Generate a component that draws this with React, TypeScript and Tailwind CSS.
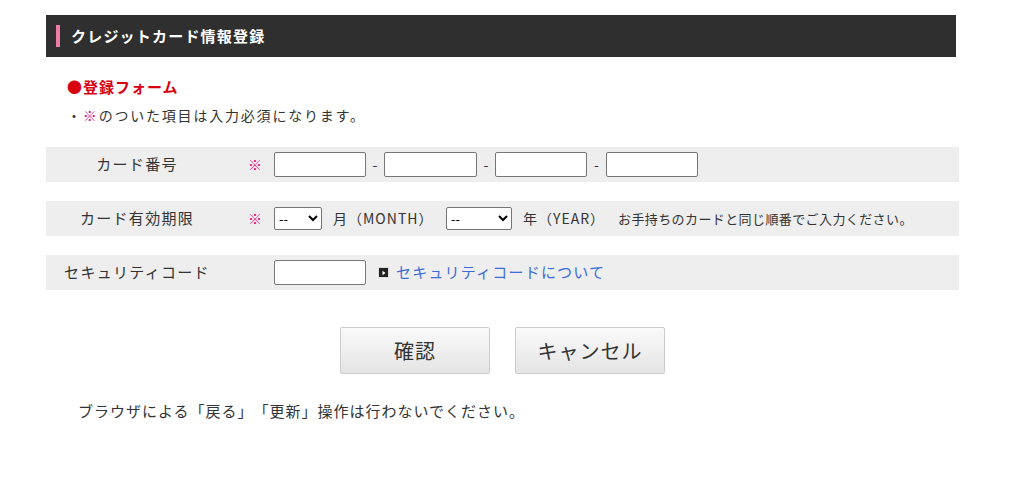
import type { ReactNode } from "react";

const font = { fontFamily: '"Noto Sans CJK JP", "Noto Sans", sans-serif' };

function Row({ label, mark, children }: { label: string; mark?: boolean; children: ReactNode }) {
  return (
    <div className="flex h-[35px] items-center bg-[#eeeeee]">
      <div className="w-[182px] text-center text-[15px] tracking-[1.3px] text-[#333]">{label}</div>
      <div className="w-[46px] pl-[20px] text-[14px] text-[#e4007f]">{mark ? "※" : ""}</div>
      <div className="flex items-center">{children}</div>
    </div>
  );
}

function Box({ w = "w-[92px]" }: { w?: string }) {
  return <input type="text" className={`${w} h-[25px] rounded-[2px] border border-[#767676] bg-white px-1 text-[14px]`} />;
}

function Dash({ w }: { w: string }) {
  return <span className={`${w} text-center text-[14px]`}>-</span>;
}

function Sel({ w }: { w: string }) {
  return (
    <select className={`${w} h-[23px] rounded-[2px] border border-[#767676] bg-white text-[13px] text-black`}>
      <option>--</option>
    </select>
  );
}

export default function App() {
  return (
    <div
      className="min-h-[485px] bg-white text-[#333] [text-spacing-trim:space-all]"
      style={font}
    >
      <div className="ml-[46px] w-[913px] pt-[15px]">
        <div className="flex h-[42px] w-[910px] items-center bg-[#2f2f2f] pl-[10px]">
          <span className="h-[22px] w-[4px] bg-[#f07ca8]" />
          <span className="ml-[11px] text-[15px] font-bold tracking-[1.2px] text-white">クレジットカード情報登録</span>
        </div>

        <div className="pl-[21px] pt-[19px]">
          <div className="text-[15px] font-bold leading-[22px] tracking-[1px] text-[#d7000f]">●登録フォーム</div>
          <div className="mt-[6px] text-[14px] leading-[22px] tracking-[1.8px]">
            ・<span className="text-[#e4007f]">※</span>のついた項目は入力必須になります。
          </div>
        </div>

        <div className="mt-[21px] flex flex-col gap-[19px]">
          <Row label="カード番号" mark>
            <Box />
            <Dash w="w-[18px]" />
            <Box w="w-[93px]" />
            <Dash w="w-[18px]" />
            <Box />
            <Dash w="w-[19px]" />
            <Box />
          </Row>
          <Row label="カード有効期限" mark>
            <Sel w="w-[48px]" />
            <span className="ml-[11px] w-[113px] text-[14px] tracking-[1px]">月（MONTH）</span>
            <Sel w="w-[66px]" />
            <span className="ml-[11px] w-[95px] text-[14px] tracking-[1px]">年（YEAR）</span>
            <span className="text-[13px] tracking-[0.4px]">お手持ちのカードと同じ順番でご入力ください。</span>
          </Row>
          <Row label="セキュリティコード">
            <Box />
            <span className="ml-[12px] flex h-[11px] w-[11px] items-center justify-center border border-[#ddd] bg-[#222]">
              <svg viewBox="0 0 8 8" className="h-[6px] w-[6px]">
                <path d="M2 1 L6 4 L2 7 Z" fill="#fff" />
              </svg>
            </span>
            <a className="ml-[7px] text-[15px] tracking-[1.2px] text-[#3d6cd6]" href="#">セキュリティコードについて</a>
          </Row>
        </div>

        <div className="mt-[37px] flex justify-center gap-[25px]">
          <button className="h-[47px] w-[150px] rounded-[2px] border border-[#cccccc] bg-gradient-to-b from-[#fafafa] to-[#e4e4e4] text-[20px] tracking-[1px] text-[#333]">確認</button>
          <button className="h-[47px] w-[150px] rounded-[2px] border border-[#cccccc] bg-gradient-to-b from-[#fafafa] to-[#e4e4e4] text-[20px] tracking-[1px] text-[#333]">キャンセル</button>
        </div>

        <div className="mt-[26px] pl-[32px] text-[15px] tracking-[1px]">ブラウザによる「戻る」「更新」操作は行わないでください。</div>
      </div>
    </div>
  );
}
